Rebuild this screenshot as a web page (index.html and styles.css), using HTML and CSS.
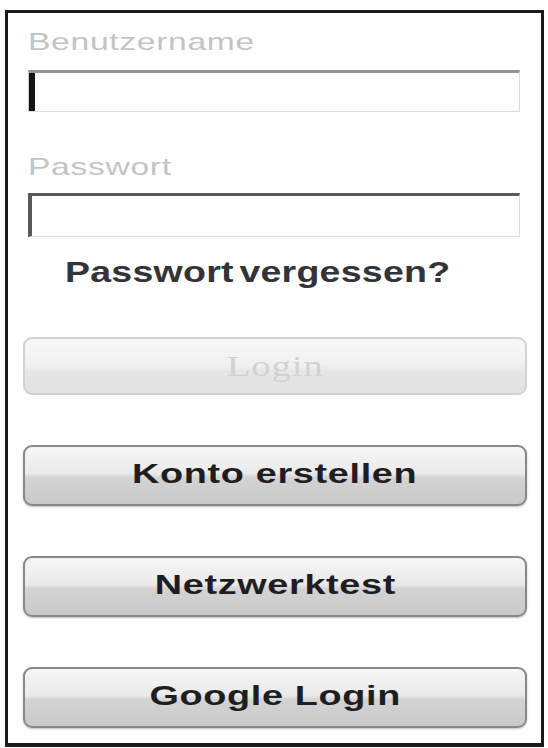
FILE: index.html
```html
<!DOCTYPE html>
<html lang="de">
<head>
<meta charset="utf-8">
<title>Login</title>
<link rel="stylesheet" href="styles.css">
</head>
<body>
<div class="frame">
  <div class="label label-user"><span class="stretch">Benutzername</span></div>
  <div class="field field-user"><span class="caret"></span></div>
  <div class="label label-pass"><span class="stretch">Passwort</span></div>
  <div class="field field-pass"></div>
  <div class="forgot"><span class="stretch">Passwort vergessen?</span></div>
  <div class="buttons">
    <div class="btn btn-disabled"><span class="stretch">Login</span></div>
    <div class="btn"><span class="stretch">Konto erstellen</span></div>
    <div class="btn"><span class="stretch">Netzwerktest</span></div>
    <div class="btn"><span class="stretch">Google Login</span></div>
  </div>
</div>
</body>
</html>
```
FILE: styles.css
```css
html, body {
  margin: 0;
  padding: 0;
  background: #ffffff;
}

body {
  font-family: "Liberation Sans", Arial, sans-serif;
}

.frame {
  box-sizing: border-box;
  margin: 10px 0 0 5px;
  width: 539px;
  height: 737px;
  border: 3px solid #1b1b1b;
  border-bottom-width: 4px;
  background: #ffffff;
  padding: 15px 14px 0 15px;
  display: flex;
  flex-direction: column;
}

.stretch {
  display: inline-block;
  white-space: nowrap;
}

.label {
  font-size: 24px;
  line-height: 28px;
  height: 28px;
  color: #c4c4c4;
  margin-left: 5px;
}

.label .stretch {
  transform: scaleX(1.4);
  transform-origin: left center;
  letter-spacing: 0.5px;
}

.label-pass {
  margin-top: 41px;
}

.field {
  box-sizing: border-box;
  margin: 14px 7px 0 5px;
  height: 42px;
  background: #ffffff;
  border: 1px solid #dddddd;
  border-top: 3px solid #959595;
  position: relative;
}

.field-user {
  border-left: 1px solid #cfcfcf;
}

.caret {
  position: absolute;
  left: 0;
  top: 0;
  width: 6px;
  height: 38px;
  background: #151515;
}

.field-pass {
  margin-top: 12px;
  height: 44px;
  border-top: 3px solid #5a5a5a;
  border-left: 4px solid #5a5a5a;
}

.forgot {
  margin-top: 18px;
  padding-left: 42px;
  font-size: 30px;
  font-weight: bold;
  line-height: 34px;
  color: #333338;
}

.forgot .stretch {
  transform: scaleX(1.25);
  transform-origin: left center;
  letter-spacing: 0.2px;
  word-spacing: -4px;
}

.buttons {
  margin-top: 48px;
  display: flex;
  flex-direction: column;
  gap: 50px;
}

.btn {
  box-sizing: border-box;
  height: 61px;
  border: 2px solid #888888;
  border-radius: 9px;
  background: linear-gradient(to bottom, #f6f6f6 0%, #eaeaea 46%, #d3d3d3 54%, #c9c9c9 100%);
  box-shadow: 0 1px 2px rgba(0, 0, 0, 0.25);
  display: flex;
  align-items: center;
  justify-content: center;
  font-size: 28px;
  font-weight: bold;
  color: #1e1e22;
  padding-bottom: 4px;
}

.btn .stretch {
  transform: scaleX(1.35);
  letter-spacing: 0.5px;
}

.btn-disabled {
  height: 58px;
  border: 2px solid #d2d2d2;
  background: linear-gradient(to bottom, #f8f8f8 0%, #f0f0f0 50%, #e6e6e6 60%, #e2e2e2 100%);
  box-shadow: none;
  font-family: "Liberation Serif", "Times New Roman", serif;
  font-weight: normal;
  font-size: 30px;
  color: #d2d2d2;
  padding-bottom: 0;
}

.btn-disabled .stretch {
  transform: scaleX(1.3);
  letter-spacing: 0.5px;
}
```
